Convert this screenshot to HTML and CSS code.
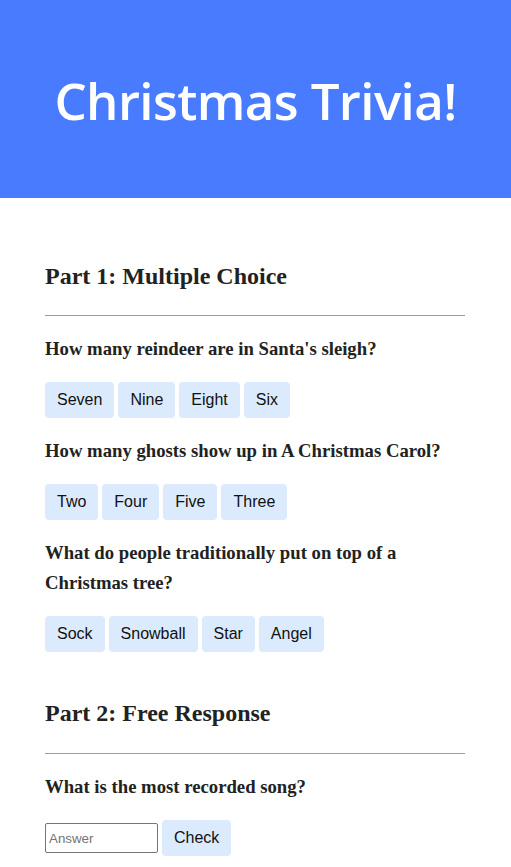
FILE: index.html
```html
<!DOCTYPE html>
<html lang="en">
<head>
<meta charset="utf-8">
<title>Christmas Trivia!</title>
<link rel="stylesheet" href="styles.css">
</head>
<body>
<header class="banner">
  <h1 class="banner-title">Christmas Trivia!</h1>
</header>
<main class="content">
  <section class="part">
    <h2 class="part-title">Part 1: Multiple Choice</h2>
    <hr class="divider">
    <h3 class="question">How many reindeer are in Santa's sleigh?</h3>
    <div class="choices">
      <button class="choice">Seven</button>
      <button class="choice">Nine</button>
      <button class="choice">Eight</button>
      <button class="choice">Six</button>
    </div>
    <h3 class="question">How many ghosts show up in A Christmas Carol?</h3>
    <div class="choices">
      <button class="choice">Two</button>
      <button class="choice">Four</button>
      <button class="choice">Five</button>
      <button class="choice">Three</button>
    </div>
    <h3 class="question">What do people traditionally put on top of a Christmas tree?</h3>
    <div class="choices">
      <button class="choice">Sock</button>
      <button class="choice">Snowball</button>
      <button class="choice">Star</button>
      <button class="choice">Angel</button>
    </div>
  </section>
  <section class="part part-second">
    <h2 class="part-title">Part 2: Free Response</h2>
    <hr class="divider">
    <h3 class="question">What is the most recorded song?</h3>
    <div class="answer-row">
      <input class="answer-input" type="text" placeholder="Answer">
      <button class="choice">Check</button>
    </div>
  </section>
</main>
</body>
</html>
```
FILE: styles.css
```css
* { box-sizing: border-box; }

body {
  margin: 0;
  font-family: "Liberation Serif", "Times New Roman", serif;
  color: #222222;
  background: #ffffff;
}

.banner {
  background: #487bff;
  height: 198px;
  display: flex;
  align-items: center;
  justify-content: center;
}

.banner-title {
  margin: 0;
  color: #ffffff;
  font-family: "Open Sans", "Liberation Sans", sans-serif;
  font-weight: 600;
  font-size: 51px;
  letter-spacing: -0.6px;
  line-height: 1;
  padding-top: 2px;
}

.content {
  padding: 59px 46px 20px 45px;
}

.part {
  display: flex;
  flex-direction: column;
  align-items: flex-start;
}

.part-second {
  margin-top: 42px;
}

.part-title {
  margin: 0;
  font-size: 24px;
  line-height: 1.6;
  font-weight: bold;
}

.divider {
  align-self: stretch;
  margin: 20px 0 18px;
  border: 0;
  border-top: 1px solid #9c9c9c;
  height: 0;
}

.question {
  margin: 0 0 18px;
  font-size: 18.72px;
  line-height: 1.6;
  font-weight: bold;
}

.choices {
  display: flex;
  gap: 4px;
  margin-bottom: 18px;
}

.choices:last-child {
  margin-bottom: 0;
}

.choice {
  font-family: "Liberation Sans", Arial, sans-serif;
  font-size: 16px;
  line-height: 20px;
  color: #111111;
  background: #dbebfd;
  border: 0;
  border-radius: 4px;
  padding: 8px 12px;
}

.answer-row {
  display: flex;
  align-items: center;
  gap: 4px;
  margin-top: 1px;
}

.answer-input {
  width: 113px;
  height: 30px;
  font-family: "Liberation Sans", Arial, sans-serif;
  font-size: 13.333px;
  padding: 1px 3px;
  border: 1px solid #767676;
  border-radius: 2px;
  color: #111111;
}

.answer-input::placeholder {
  color: #757575;
}
```
